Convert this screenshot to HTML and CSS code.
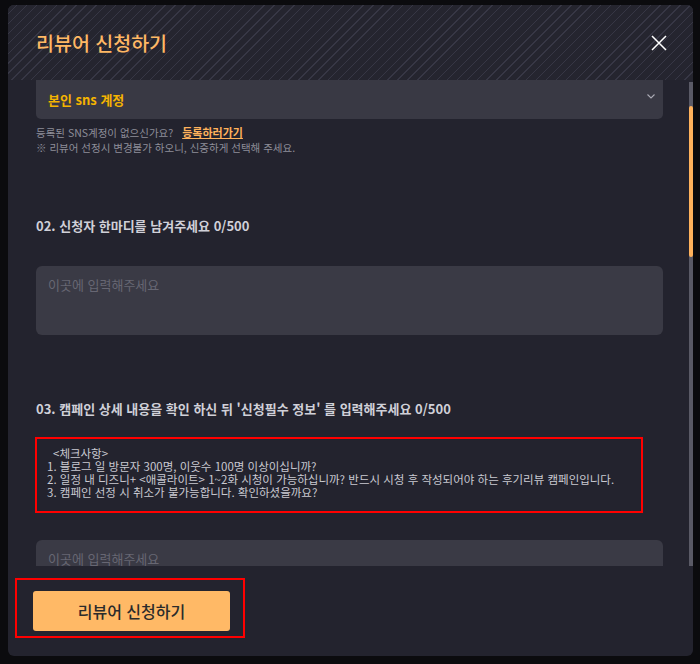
FILE: index.html
```html
<!DOCTYPE html>
<html lang="ko">
<head>
<meta charset="utf-8">
<title>리뷰어 신청하기</title>
<link rel="stylesheet" href="styles.css">
</head>
<body>
<div class="modal">
  <div class="modal-header">
    <h1 class="modal-title">리뷰어 신청하기</h1>
    <button class="close-btn" aria-label="닫기">
      <svg width="16" height="16" viewBox="0 0 16 16"><path d="M1 1 L15 15 M15 1 L1 15" stroke="#ffffff" stroke-width="1.5" fill="none"/></svg>
    </button>
  </div>
  <div class="modal-body">
    <div class="content">
      <div class="select">
        <span class="select-text">본인 sns 계정</span>
        <svg class="chev" width="8" height="5" viewBox="0 0 8 5"><path d="M0.5 0.5 L4 4 L7.5 0.5" stroke="#a9a9b3" stroke-width="1.1" fill="none"/></svg>
      </div>
      <div class="help">
        <div>등록된 SNS계정이 없으신가요? <a class="link">등록하러가기</a></div>
        <div>※ 리뷰어 선정시 변경불가 하오니, 신중하게 선택해 주세요.</div>
      </div>

      <h2 class="q q2">02. 신청자 한마디를 남겨주세요 0/500</h2>
      <div class="textarea tall"><span class="ph">이곳에 입력해주세요</span></div>

      <h2 class="q q3">03. 캠페인 상세 내용을 확인 하신 뒤 '신청필수 정보' 를 입력해주세요 0/500</h2>
      <div class="check">
        <div class="indent">&lt;체크사항&gt;</div>
        <div>1. 블로그 일 방문자 300명, 이웃수 100명 이상이십니까?</div>
        <div>2. 일정 내 디즈니+ &lt;애콜라이트&gt; 1~2화 시청이 가능하십니까? 반드시 시청 후 작성되어야 하는 후기리뷰 캠페인입니다.</div>
        <div>3. 캠페인 선정 시 취소가 불가능합니다. 확인하셨을까요?</div>
      </div>
      <div class="textarea second"><span class="ph">이곳에 입력해주세요</span></div>
    </div>
    <div class="scrollbar"><div class="thumb"></div></div>
  </div>
  <div class="modal-footer">
    <div class="highlight">
      <button class="submit">리뷰어 신청하기</button>
    </div>
  </div>
</div>
</body>
</html>
```
FILE: styles.css
```css
* { box-sizing: border-box; }
html, body { margin: 0; padding: 0; }
body {
  width: 700px;
  height: 664px;
  overflow: hidden;
  background: #0b0b0e;
  font-family: "Noto Sans CJK KR", "Noto Sans", sans-serif;
}
.modal {
  margin: 5px 0 0 8px;
  width: 685px;
  height: 651px;
  border-radius: 6px;
  background: #23232e;
  overflow: hidden;
  display: flex;
  flex-direction: column;
}
.modal-header {
  height: 75px;
  flex: none;
  display: flex;
  align-items: center;
  justify-content: space-between;
  padding: 0 26px 0 28px;
  background-color: #25252f;
  background-image: repeating-linear-gradient(135deg, #25252f 0px, #25252f 6px, #373745 6px, #373745 7px);
}
.modal-title {
  margin: 0;
  font-size: 19.5px;
  font-weight: 500;
  color: #ffb864;
}
.close-btn {
  background: none;
  border: 0;
  padding: 0;
  width: 16px;
  height: 16px;
  display: flex;
}
.modal-body {
  height: 486px;
  flex: none;
  display: flex;
}
.content {
  flex: 1;
  overflow: hidden;
  padding: 0 26px 0 28px;
}
.select {
  height: 39px;
  background: #393944;
  border-radius: 0 0 5px 5px;
  padding: 0 8px 0 12px;
  display: flex;
  align-items: center;
  justify-content: space-between;
}
.select-text {
  font-size: 13px;
  font-weight: 700;
  color: #f5b400;
}
.chev { margin-top: -6px; }
.help {
  margin-top: 6px;
  font-size: 10.5px;
  line-height: 15px;
  color: #8e8e99;
}
.link {
  color: #ffb25b;
  font-weight: 700;
  text-decoration: underline;
  margin-left: 6px;
  font-size: 11px;
}
.q {
  margin: 0;
  font-size: 13px;
  line-height: 20px;
  font-weight: 700;
  color: #d0d0d8;
}
.q2 { margin-top: 61px; }
.q3 { margin-top: 64px; }
.textarea {
  background: #3a3a45;
  border-radius: 6px;
  padding: 10px 12px;
  font-size: 13px;
  line-height: 18px;
}
.tall { margin-top: 30px; height: 69px; }
.second { margin-top: 27px; height: 60px; border-radius: 6px 6px 0 0; }
.ph {
  font-size: 13px;
  line-height: 18px;
  color: #676773;
}
.check {
  margin-top: 18px;
  margin-left: -1px;
  width: 608px;
  border: 2px solid #ff0000;
  padding: 7.5px 10px 12.5px 10px;
  font-size: 11.5px;
  line-height: 13px;
  color: #c9c9d1;
}
.indent { margin-left: 6px; }
.scrollbar {
  width: 4px;
  margin-top: 2px;
  background: #5a5a66;
  flex: none;
}
.thumb {
  margin-top: 24px;
  height: 151px;
  background: #ffb25c;
  border-radius: 2px;
}
.modal-footer {
  flex: 1;
  padding: 12px 0 0 7px;
}
.highlight {
  display: inline-block;
  border: 2px solid #ff0000;
  padding: 11px 13px 5px 16px;
}
.submit {
  display: block;
  width: 197px;
  height: 40px;
  border: 0;
  border-radius: 3px;
  background: #ffb966;
  color: #2b2b2b;
  font-family: "Noto Sans CJK KR", "Noto Sans", sans-serif;
  font-size: 16px;
  font-weight: 500;
  padding: 0;
}
```
